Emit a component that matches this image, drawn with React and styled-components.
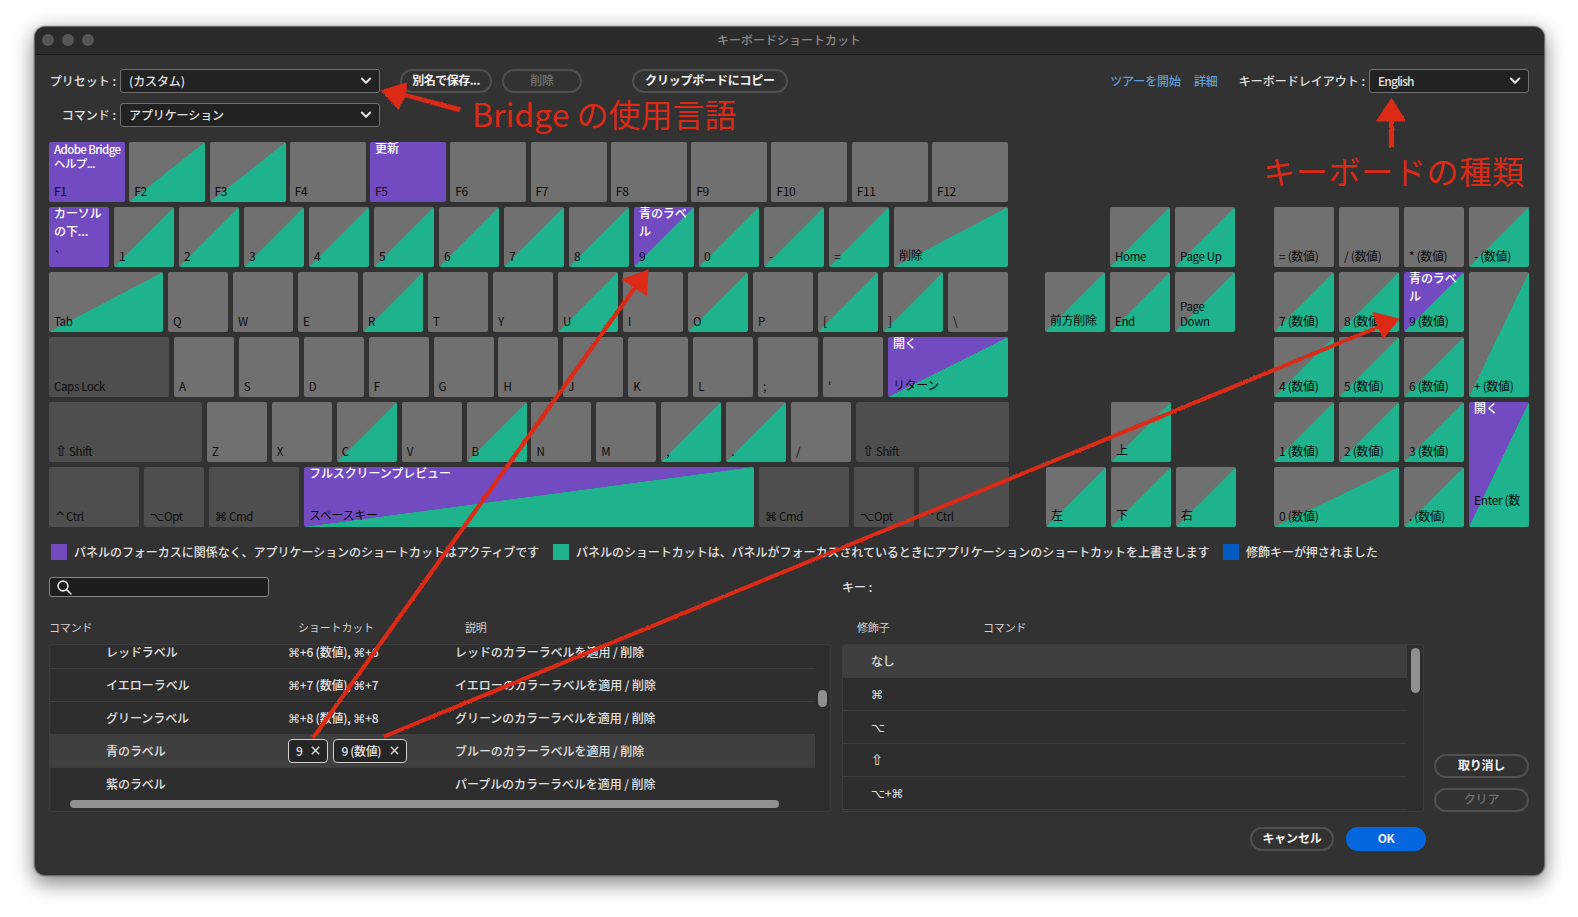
import * as React from "react";
import styled, { createGlobalStyle } from 'styled-components'

const GlobalStyle = createGlobalStyle`
  * { box-sizing: border-box; }
  body {
    margin: 0;
    background: #fff;
    overflow: hidden;
    font-family: "Noto Sans CJK JP", "Noto Sans", "DejaVu Sans", sans-serif;
    font-size: 12px;
    line-height: 16px;
    color: #e0e0e0;
  }
`

const GREEN = '#1eb38c'
const PURPLE = '#734bc0'
const GREY = '#707070'

// g: panel shortcut, p: application shortcut, pg: both, m: modifier key
const mainRows = [
  [
    {k:'F1', w:76, t:'p', cmd:['Adobe Bridge','ヘルプ...'], tight:true},
    {k:'F2', w:76, t:'g'}, {k:'F3', w:76, t:'g'}, {k:'F4', w:76},
    {k:'F5', w:76, t:'p', cmd:['更新']},
    {k:'F6', w:76}, {k:'F7', w:76}, {k:'F8', w:76}, {k:'F9', w:76},
    {k:'F10', w:76}, {k:'F11', w:76}, {k:'F12', w:76},
  ],
  [
    {k:'`', t:'p', cmd:['カーソル','の下...']},
    {k:'1', t:'g'}, {k:'2', t:'g'}, {k:'3', t:'g'}, {k:'4', t:'g'}, {k:'5', t:'g'},
    {k:'6', t:'g'}, {k:'7', t:'g'}, {k:'8', t:'g'},
    {k:'9', t:'pg', cmd:['青のラベ','ル']},
    {k:'0', t:'g'}, {k:'-', t:'g'}, {k:'=', t:'g'},
    {k:'削除', w:114, t:'g', raise:1},
  ],
  [
    {k:'Tab', w:114, t:'g'}, {k:'Q'}, {k:'W'}, {k:'E'}, {k:'R', t:'g'}, {k:'T'}, {k:'Y'},
    {k:'U', t:'g'}, {k:'I'}, {k:'O', t:'g'}, {k:'P'}, {k:'[', t:'g'}, {k:']', t:'g'}, {k:'\\'},
  ],
  [
    {k:'Caps Lock', w:120, t:'m'}, {k:'A'}, {k:'S'}, {k:'D'}, {k:'F'}, {k:'G'}, {k:'H'},
    {k:'J'}, {k:'K'}, {k:'L'}, {k:';'}, {k:"'"},
    {k:'リターン', w:120, t:'pg', cmd:['開く'], raise:1},
  ],
  [
    {k:'Shift', icon:'⇧', w:153, t:'m'}, {k:'Z'}, {k:'X'}, {k:'C', t:'g'}, {k:'V'}, {k:'B', t:'g'},
    {k:'N'}, {k:'M'}, {k:',', t:'g'}, {k:'.', t:'g'}, {k:'/'}, {k:'Shift', icon:'⇧', w:153, t:'m'},
  ],
  [
    {k:'Ctrl', icon:'^', w:90, t:'m'}, {k:'Opt', icon:'⌥', t:'m'}, {k:'Cmd', icon:'⌘', w:90, t:'m'},
    {k:'スペースキー', w:450, t:'pg', cmd:['フルスクリーンプレビュー'], raise:1},
    {k:'Cmd', icon:'⌘', w:90, t:'m'}, {k:'Opt', icon:'⌥', t:'m'}, {k:'Ctrl', icon:'^', w:90, t:'m'},
  ],
]

const navKeys = [
  {k:'Home', at:'2 / 2'}, {k:'Page Up', at:'2 / 3'},
  {k:'前方削除', at:'3 / 1', raise:1}, {k:'End', at:'3 / 2'}, {k:'Page Down', at:'3 / 3', wrap:true},
  {k:'上', at:'5 / 2', raise:1, nudge:true},
  {k:'左', at:'6 / 1', raise:1, nudge:true}, {k:'下', at:'6 / 2', raise:1, nudge:true}, {k:'右', at:'6 / 3', raise:1, nudge:true},
]

const padKeys = [
  {k:'= (数値)', at:'2 / 1', t:''}, {k:'/ (数値)', at:'2 / 2', t:''}, {k:'* (数値)', at:'2 / 3', t:''}, {k:'- (数値)', at:'2 / 4'},
  {k:'7 (数値)', at:'3 / 1'}, {k:'8 (数値)', at:'3 / 2'}, {k:'9 (数値)', at:'3 / 3', t:'pg', cmd:['青のラベ','ル']},
  {k:'+ (数値)', at:'3 / 4 / span 2'},
  {k:'4 (数値)', at:'4 / 1'}, {k:'5 (数値)', at:'4 / 2'}, {k:'6 (数値)', at:'4 / 3'},
  {k:'1 (数値)', at:'5 / 1'}, {k:'2 (数値)', at:'5 / 2'}, {k:'3 (数値)', at:'5 / 3'},
  {k:'Enter (数', at:'5 / 4 / span 2', t:'pg', cmd:['開く'], raise:16},
  {k:'0 (数値)', at:'6 / 1 / auto / span 2'}, {k:'. (数値)', at:'6 / 3'},
]

const commands = [
  {name:'レッドラベル', keys:'⌘+6 (数値), ⌘+6', desc:'レッドのカラーラベルを適用 / 削除'},
  {name:'イエローラベル', keys:'⌘+7 (数値), ⌘+7', desc:'イエローのカラーラベルを適用 / 削除'},
  {name:'グリーンラベル', keys:'⌘+8 (数値), ⌘+8', desc:'グリーンのカラーラベルを適用 / 削除'},
  {name:'青のラベル', tags:['9','9 (数値)'], desc:'ブルーのカラーラベルを適用 / 削除'},
  {name:'紫のラベル', keys:'', desc:'パープルのカラーラベルを適用 / 削除'},
]

const modifiers = ['なし', '⌘', '⌥', '⇧', '⌥+⌘']

// modifier symbols get their own font, the rest stays in the ui font
function Keys({ text }) {
  return (
    <KeysText>
      {text.split(/([⌘⌥⇧])/).map((part, i) => (i % 2 ? <Symbol key={i} $big={part === '⇧'}>{part}</Symbol> : part))}
    </KeysText>
  )
}

function Key({ data }) {
  return (
    <KeyCap $type={data.t} $w={data.w} $at={data.at} $nudge={data.nudge} $raise={data.raise}>
      <KeyCommand $tight={data.tight}>
        {data.cmd && data.cmd.map((line) => <div key={line}>{line}</div>)}
      </KeyCommand>
      <KeyName $wrap={data.wrap} $latin={/^[A-Za-z ]+$/.test(data.k)}>
        {data.icon && <KeyIcon $big={data.icon === '⇧'} $w={data.icon === '^' ? 12 : 15}>{data.icon}</KeyIcon>}
        {data.k}
      </KeyName>
    </KeyCap>
  )
}

function Chevron() {
  return (
    <svg width="12" height="8" viewBox="0 0 12 8" fill="none" stroke="#e4e4e4" strokeWidth="2" strokeLinecap="round" strokeLinejoin="round">
      <path d="M1.8 1.5 L6 5.7 L10.2 1.5" />
    </svg>
  )
}

function Cross() {
  return (
    <svg width="9" height="9" viewBox="0 0 9 9" stroke="#e0e0e0" strokeWidth="1.4">
      <path d="M0.8 0.8 L8.2 8.2 M8.2 0.8 L0.8 8.2" />
    </svg>
  )
}

function Annotations() {
  return (
    <Overlay>
      <ArrowLayer width="1578" height="917" viewBox="0 0 1578 917">
        <filter id="rough" x="-5%" y="-5%" width="110%" height="110%">
          <feTurbulence type="fractalNoise" baseFrequency="0.45" numOctaves="2" seed="4" result="n" />
          <feDisplacementMap in="SourceGraphic" in2="n" scale="2.2" xChannelSelector="R" yChannelSelector="G" />
        </filter>
        <g filter="url(#rough)" fill="#dc2a17" stroke="#dc2a17">
          <path d="M404 93 L460.5 107.5 L459 112 L404 96.5 Z" strokeWidth="0.6" />
          <path d="M381 90.5 L406.5 83 L405.5 95 L398.5 109.5 Z" strokeWidth="1" />
          <path d="M1391.5 118 V147" strokeWidth="5.2" />
          <path d="M1391.5 98.5 L1405.5 121 L1376.5 121 Z" strokeWidth="1" />
          <path d="M313 738 L636 286" strokeWidth="4.2" />
          <path d="M648 270 L622.5 279.5 L646.5 295.5 Z" strokeWidth="1" />
          <path d="M384 736.5 L1382 325.5" strokeWidth="4" />
          <path d="M1399 319 L1373 312.5 L1383 338.5 Z" strokeWidth="1" />
        </g>
      </ArrowLayer>
      <Note $x={472} $y={90}>Bridge の使用言語</Note>
      <Note $x={1263} $y={147} $track={0.7}>キーボードの種類</Note>
    </Overlay>
  )
}

function App() {
  const [preset] = React.useState('(カスタム)')
  const [selected, setSelected] = React.useState(3)

  return (
    <Page>
      <GlobalStyle />
      <Window>
        <TitleBar>
          <Lights><Light /><Light /><Light /></Lights>
          <WindowTitle>キーボードショートカット</WindowTitle>
        </TitleBar>
        <Content>
          <Toolbar>
            <Label>プリセット :</Label>
            <Select $w={260}>{preset}<Chevron /></Select>
            <Button $w={92} $ml={20} $track={-0.5}>別名で保存...</Button>
            <Button $w={80} $ml={10} disabled>削除</Button>
            <Button $w={156} $ml={50}>クリップボードにコピー</Button>
            <Links>
              <Link>ツアーを開始</Link>
              <Link>詳細</Link>
            </Links>
            <LayoutLabel>キーボードレイアウト :</LayoutLabel>
            <Select $w={160} $track={-0.9}>English<Chevron /></Select>
          </Toolbar>
          <Toolbar>
            <Label>コマンド :</Label>
            <Select $w={260}>アプリケーション<Chevron /></Select>
          </Toolbar>

          <Keyboard>
            <MainKeys>
              {mainRows.map((row, i) => (
                <KeyRow key={i} $w={i > 3 ? 960 : 959}>
                  {row.map((el, j) => <Key data={el} key={`${el.k}-${j}`} />)}
                </KeyRow>
              ))}
            </MainKeys>
            <KeyGrid $cols={3}>
              {navKeys.map((el) => <Key data={{ t: 'g', ...el }} key={el.k} />)}
            </KeyGrid>
            <KeyGrid $cols={4}>
              {padKeys.map((el) => <Key data={{ t: 'g', ...el }} key={el.k} />)}
            </KeyGrid>
          </Keyboard>

          <Legend>
            <Swatch $color={PURPLE} />
            <LegendText $w={479}>パネルのフォーカスに関係なく、アプリケーションのショートカットはアクティブです</LegendText>
            <Swatch $color={GREEN} />
            <LegendText $w={647}>パネルのショートカットは、パネルがフォーカスされているときにアプリケーションのショートカットを上書きします</LegendText>
            <Swatch $color="#045bc2" />
            <LegendText $w={140}>修飾キーが押されました</LegendText>
          </Legend>

          <Panels>
            <Panel $w={782}>
              <Search>
                <svg width="15" height="15" viewBox="0 0 15 15" fill="none" stroke="#e6e6e6" strokeWidth="1.6" strokeLinecap="round">
                  <circle cx="6" cy="6" r="4.9" />
                  <path d="M9.6 9.6 L14 14" />
                </svg>
              </Search>
              <Header>
                <Head $w={249}>コマンド</Head>
                <Head $w={167}>ショートカット</Head>
                <Head>説明</Head>
              </Header>
              <Table>
                <Rows $w={765} $offset={-9}>
                  {commands.map((el, i) => (
                    <Row key={el.name} $active={i === selected} onClick={() => setSelected(i)}>
                      <Cell $pl={56} $w={238}>{el.name}</Cell>
                      <Cell $w={167}>
                        {el.tags ? el.tags.map((tag) => <Tag key={tag}>{tag}<Cross /></Tag>) : <Keys text={el.keys} />}
                      </Cell>
                      <Cell>{el.desc}</Cell>
                    </Row>
                  ))}
                </Rows>
                <VThumb $top={45} $h={17} />
                <HTrack><HThumb /></HTrack>
              </Table>
            </Panel>
            <Panel $w={582}>
              <KeyLine>キー :</KeyLine>
              <Header>
                <Head $pl={15} $w={141}>修飾子</Head>
                <Head>コマンド</Head>
              </Header>
              <Table>
                <Rows $w={564} $offset={0}>
                  {modifiers.map((el, i) => <Row key={el} $active={i === 0}><Cell $pl={28}><Keys text={el} /></Cell></Row>)}
                </Rows>
                <VThumb $top={3} $h={45} />
              </Table>
            </Panel>
            <SideButtons>
              <Button $w={95}>取り消し</Button>
              <Button $w={95} disabled>クリア</Button>
            </SideButtons>
          </Panels>

          <Footer>
            <Button $w={84}>キャンセル</Button>
            <Button $w={80} $primary $track={-0.5}>OK</Button>
          </Footer>
        </Content>
      </Window>
      <Annotations />
    </Page>
  );
}

const Page = styled.div`
  position: relative;
  width: 1578px;
  height: 917px;
  padding: 26px 0 0 34px;
  background: #fff;
`

const Window = styled.div`
  width: 1511px;
  height: 850px;
  border-radius: 11px;
  overflow: hidden;
  background: #323232;
  border: 1px solid #6c6c6c;
  box-shadow: 0 0 1px 1px rgba(0,0,0,0.14), 0 9px 19px rgba(0,0,0,0.34), 0 2px 22px rgba(0,0,0,0.2);
`

const TitleBar = styled.div`
  display: grid;
  grid-template-columns: 1fr auto 1fr;
  align-items: center;
  height: 28px;
  padding: 0 0 2px 7px;
  background: #2a2a2a;
  border-bottom: 1px solid #181818;
`

const Lights = styled.div`
  display: flex;
  gap: 8px;
`

const Light = styled.span`
  width: 12px;
  height: 12px;
  border-radius: 50%;
  background: #565656;
`

const WindowTitle = styled.div`
  color: #8a8a8a;
  font-weight: 500;
  margin-left: -8px;
`

const Content = styled.div`
  width: 1494px;
  padding: 14px 0 0 14px;
`

const Toolbar = styled.div`
  display: flex;
  align-items: center;
  height: 24px;
  margin-bottom: 10px;
`

const Label = styled.div`
  width: 71px;
  padding-right: 4px;
  text-align: right;
  font-weight: 500;
  white-space: nowrap;
`

const LayoutLabel = styled(Label)`
  width: auto;
  margin-left: 21px;
`

const Select = styled.div`
  display: flex;
  align-items: center;
  justify-content: space-between;
  width: ${(p) => p.$w}px;
  height: 24px;
  padding: 0 7px 1px 8px;
  background: #222;
  border: 1px solid #707070;
  border-radius: 3px;
  font-weight: 500;
  letter-spacing: ${(p) => p.$track || -0.1}px;
`

const Button = styled.button`
  width: ${(p) => p.$w}px;
  height: 24px;
  margin: 0 0 0 ${(p) => p.$ml || 0}px;
  padding: 0 0 2px;
  font-family: inherit;
  font-size: 12px;
  line-height: 16px;
  font-weight: 700;
  letter-spacing: ${(p) => p.$track || -0.2}px;
  white-space: nowrap;
  border-radius: 12px;
  border: 2px solid ${(p) => (p.$primary ? '#0567e0' : '#505050')};
  background: ${(p) => (p.$primary ? '#0567e0' : 'transparent')};
  color: #f2f2f2;
  &:disabled {
    color: #727272;
    font-weight: 500;
  }
`

const Links = styled.div`
  display: flex;
  gap: 13px;
  margin-left: auto;
`

const Link = styled.a`
  color: #5b9fdc;
  font-weight: 500;
  letter-spacing: -0.1px;
`

const Keyboard = styled.div`
  display: flex;
  margin-top: 15px;
`

const MainKeys = styled.div`
  display: flex;
  flex-direction: column;
  gap: 5px;
  width: 996px;
`

const KeyRow = styled.div`
  display: flex;
  justify-content: space-between;
  width: ${(p) => p.$w}px;
  height: 60px;
`

const KeyGrid = styled.div`
  display: grid;
  grid-template-columns: repeat(${(p) => p.$cols}, 60px);
  grid-template-rows: repeat(6, 60px);
  gap: 5px;
  & + & {
    margin-left: 39px;
  }
`

const keyFill = (type) => {
  if (type === 'm') return '#4e4e4e'
  if (type === 'p') return PURPLE
  if (type === 'g') return `linear-gradient(to bottom right, ${GREY} 49.8%, ${GREEN} 50.2%)`
  if (type === 'pg') return `linear-gradient(to bottom right, ${PURPLE} 49.8%, ${GREEN} 50.2%)`
  return GREY
}

const KeyCap = styled.div`
  display: flex;
  flex-direction: column;
  justify-content: space-between;
  flex: none;
  border-radius: 2px;
  padding: 0 0 ${(p) => 3 + (p.$raise || 0)}px 5px;
  background: ${(p) => keyFill(p.$type)};
  ${(p) => (p.$at ? `grid-area: ${p.$at};` : `width: ${p.$w || 60}px;`)}
  ${(p) => p.$nudge && 'margin: 0 -1px 0 1px;'}
`

const KeyCommand = styled.div`
  color: #fff;
  font-weight: 500;
  white-space: nowrap;
  font-size: ${(p) => (p.$tight ? 11.5 : 12)}px;
  line-height: ${(p) => (p.$tight ? 14 : 18)}px;
  letter-spacing: ${(p) => (p.$tight ? -0.6 : -0.1)}px;
  margin-top: ${(p) => (p.$tight ? 0 : -3)}px;
`

const KeyName = styled.div`
  color: #0c0c0c;
  white-space: ${(p) => (p.$wrap ? 'normal' : 'nowrap')};
  line-height: ${(p) => (p.$wrap ? 15 : 16)}px;
  font-size: ${(p) => (p.$latin ? 11.5 : 12)}px;
  letter-spacing: -0.35px;
`

const Symbol = styled.span`
  font-family: "DejaVu Sans", sans-serif;
  font-size: ${(p) => (p.$big ? 15 : 12)}px;
  line-height: 1;
`

const KeyIcon = styled(Symbol)`
  display: inline-block;
  width: ${(p) => p.$w}px;
  height: 12px;
  line-height: 12px;
  text-indent: 1px;
`

const KeysText = styled.span`
  letter-spacing: -0.2px;
`

const Legend = styled.div`
  display: flex;
  align-items: center;
  height: 16px;
  margin: 17px 0 17px 2px;
`

const Swatch = styled.span`
  flex: none;
  width: 16px;
  height: 16px;
  background: ${(p) => p.$color};
`

const LegendText = styled.span`
  flex: none;
  width: ${(p) => p.$w}px;
  margin-left: 7px;
  font-weight: 500;
  white-space: nowrap;
  letter-spacing: -0.03px;
`

const Panels = styled.div`
  display: flex;
  height: 235px;
`

const Panel = styled.div`
  display: flex;
  flex-direction: column;
  width: ${(p) => p.$w}px;
  margin-right: 11px;
`

const Search = styled.div`
  display: flex;
  align-items: center;
  width: 220px;
  height: 20px;
  padding-left: 7px;
  background: #1d1d1d;
  border: 1px solid #868686;
  border-radius: 3px;
`

const KeyLine = styled.div`
  height: 20px;
  line-height: 20px;
  font-weight: 500;
`

const Header = styled.div`
  display: flex;
  height: 47px;
  padding-top: 22px;
  font-size: 11px;
  letter-spacing: -0.15px;
  color: #d0d0d0;
`

const Head = styled.div`
  width: ${(p) => (p.$w ? `${p.$w}px` : 'auto')};
  padding-left: ${(p) => p.$pl || 0}px;
`

const Table = styled.div`
  display: grid;
  grid-template-columns: 1fr 12px;
  grid-template-rows: 1fr auto;
  height: 168px;
  overflow: hidden;
  background: #2e2e2e;
  border: 1px solid #3d3d3d;
  border-radius: 3px;
`

const Rows = styled.div`
  width: ${(p) => p.$w}px;
  height: 0;
  margin-top: ${(p) => p.$offset}px;
`

const Row = styled.div`
  display: flex;
  align-items: center;
  height: 33px;
  border-bottom: 1px solid #3d3d3d;
  background: ${(p) => (p.$active ? '#3f3f3f' : 'transparent')};
`

const Cell = styled.div`
  display: flex;
  gap: 5px;
  flex: none;
  width: ${(p) => (p.$w ? `${p.$w}px` : 'auto')};
  padding-left: ${(p) => p.$pl || 0}px;
  font-weight: 500;
  white-space: nowrap;
  letter-spacing: -0.05px;
`

const Tag = styled.span`
  display: flex;
  align-items: center;
  gap: 9px;
  height: 24px;
  padding: 0 7px 1px 7px;
  background: #252525;
  border: 1px solid #d0d0d0;
  border-radius: 4px;
  letter-spacing: -0.4px;
`

const VThumb = styled.div`
  width: 9px;
  height: ${(p) => p.$h}px;
  margin-top: ${(p) => p.$top}px;
  border-radius: 5px;
  background: #909090;
`

const HTrack = styled.div`
  height: 11px;
  padding-left: 20px;
  background: #2e2e2e;
  z-index: 1;
`

const HThumb = styled.div`
  width: 709px;
  height: 8px;
  border-radius: 4px;
  background: #909090;
`

const SideButtons = styled.div`
  display: flex;
  flex-direction: column;
  justify-content: flex-end;
  gap: 10px;
  margin-left: -1px;
`

const Footer = styled.div`
  display: flex;
  justify-content: flex-end;
  gap: 12px;
  margin: 15px 103px 0 0;
`

const Overlay = styled.div`
  position: absolute;
  inset: 0;
  pointer-events: none;
`

const ArrowLayer = styled.svg`
  position: absolute;
  left: 0;
  top: 0;
`

const Note = styled.div`
  position: absolute;
  left: ${(p) => p.$x}px;
  top: ${(p) => p.$y}px;
  color: #dc2a17;
  font-size: 32px;
  line-height: 46px;
  letter-spacing: ${(p) => p.$track || 0}px;
  white-space: nowrap;
`

export default App;
